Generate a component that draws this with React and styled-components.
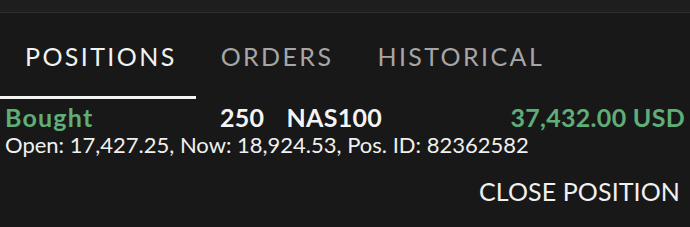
import styled, { createGlobalStyle } from 'styled-components';

const GlobalStyle = createGlobalStyle`
  html, body {
    margin: 0;
    padding: 0;
    background: #181818;
  }
  body {
    font-family: "Lato", "Open Sans", sans-serif;
  }
`

const Screen = styled.div`
  width: 690px;
  height: 227px;
  background: #181818;
  display: flex;
  flex-direction: column;
  overflow: hidden;
`

const TopStrip = styled.div`
  height: 12px;
  background: #1e1e1e;
  border-bottom: 1px solid #2e2e2e;
`

const Tabs = styled.div`
  display: flex;
  height: 86px;
`

const Tab = styled.div`
  display: flex;
  align-items: center;
  padding: 2px 19px 0 25px;
  font-size: 25px;
  letter-spacing: 2.4px;
  color: ${p => (p.active ? '#f2f2f2' : '#a6a6a6')};
  border-bottom: 3px solid ${p => (p.active ? '#f4f4f4' : 'transparent')};
`

const Position = styled.div`
  display: flex;
  flex-direction: column;
  padding: 4px 5px 0 5px;
`

const MainRow = styled.div`
  display: flex;
  align-items: baseline;
  font-size: 25px;
  font-weight: 700;
  line-height: 29px;
  letter-spacing: 0.3px;
`

const Side = styled.span`
  width: 215px;
  color: #5fae78;
  letter-spacing: 1.2px;
`

const Qty = styled.span`
  color: #f4f4f4;
  margin-right: 22px;
`

const Symbol = styled.span`
  color: #f4f4f4;
`

const Amount = styled.span`
  margin-left: auto;
  color: #5fae78;
`

const Details = styled.div`
  font-size: 22px;
  line-height: 26px;
  color: #f0f0f0;
`

const Actions = styled.div`
  display: flex;
  justify-content: flex-end;
  padding-top: 18px;
  padding-right: 5px;
`

const CloseButton = styled.button`
  background: none;
  border: none;
  padding: 0;
  font-family: inherit;
  font-size: 25px;
  letter-spacing: 0.1px;
  color: #f0f0f0;
  cursor: pointer;
`

export default function App() {
  const tabs = ['POSITIONS', 'ORDERS', 'HISTORICAL'];
  return (
    <>
      <GlobalStyle />
      <Screen>
        <TopStrip />
        <Tabs>
          {tabs.map((t, i) => (
            <Tab key={t} active={i === 0}>{t}</Tab>
          ))}
        </Tabs>
        <Position>
          <MainRow>
            <Side>Bought</Side>
            <Qty>250</Qty>
            <Symbol>NAS100</Symbol>
            <Amount>37,432.00 USD</Amount>
          </MainRow>
          <Details>Open: 17,427.25, Now: 18,924.53, Pos. ID: 82362582</Details>
          <Actions>
            <CloseButton>CLOSE POSITION</CloseButton>
          </Actions>
        </Position>
      </Screen>
    </>
  );
}
